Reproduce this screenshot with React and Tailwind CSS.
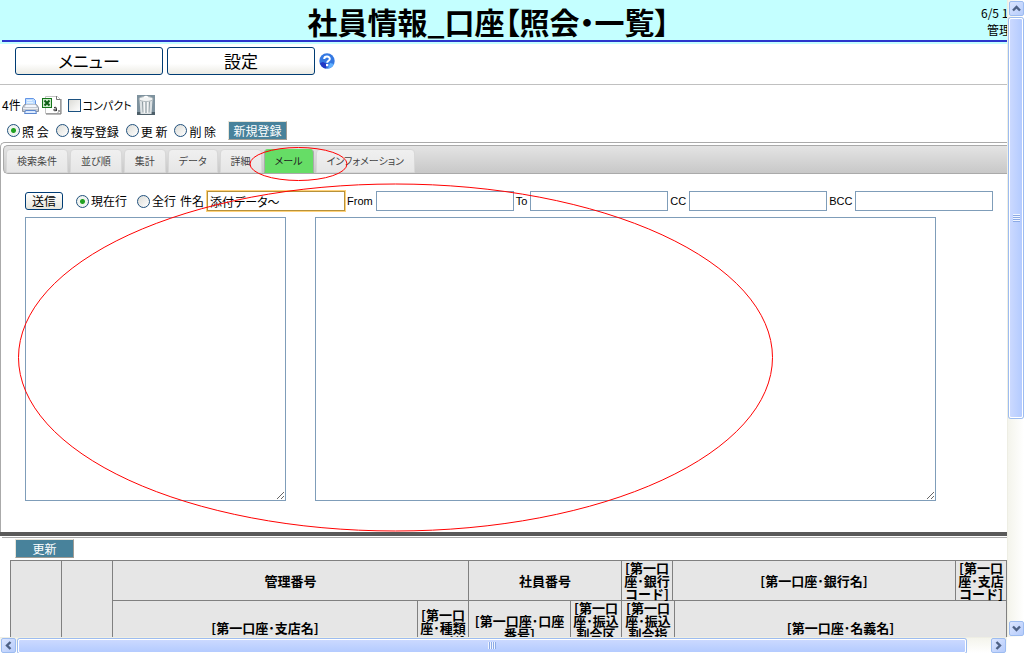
import React, { useState } from 'react';

const TABS = ['検索条件', '並び順', '集計', 'データ', '詳細', 'メール', 'インフォメーション'];
const MODES = ['照 会', '複写登録', '更 新', '削 除'];
const ADDRESS_FIELDS = ['From', 'To', 'CC', 'BCC'];

const radioClass =
    'appearance-none shrink-0 w-[13px] h-[13px] rounded-full border border-[#21517d] bg-linear-to-br from-[#dcdcd7] to-white checked:bg-[radial-gradient(circle,#21a121_0_2px,#f0f4f0_3px)]';
const thumbClass = 'rounded-[2px] border border-white shadow-[0_0_0_1px_#9dbcf0] flex items-center justify-center';
const arrowClass =
    'shrink-0 w-[15px] h-[15px] rounded-[2px] border border-[#9dbcf0] bg-linear-to-br from-[#dce6ff] to-[#b5cbfb] flex items-center justify-center';
const tealButtonClass =
    'w-[59px] h-[19px] border border-t-[#e8e4d8] border-l-[#e8e4d8] border-r-[#a09c94] border-b-[#a09c94] bg-[#48829b] text-white';

const Arrow = ({ d, label }) => (
    <button type="button" aria-label={label} className={arrowClass}>
        <svg width="9" height="9" viewBox="0 0 9 9" fill="none" stroke="#4d6185" strokeWidth="2.4">
            <path d={d} />
        </svg>
    </button>
);

const HelpIcon = () => (
    <svg width="16" height="16" viewBox="0 0 16 16">
        <circle cx="8" cy="8" r="7.7" fill="#3478e2" />
        <path d="M1 10a7.5 7.5 0 0 0 6 5.6L8 11 4 9z" fill="#2338c4" />
        <path d="M9 15.6A7.6 7.6 0 0 0 15 11l-4-1z" fill="#62b0ff" />
        <path d="M5.2 6C5.3 2.6 11 2.8 10.8 6c0 1.8-2.5 1.8-2.6 3.7" fill="none" stroke="#fff" strokeWidth="2" />
        <rect x="7" y="11" width="2.3" height="2.2" fill="#fff" />
    </svg>
);

const PrinterIcon = () => (
    <svg width="17" height="17" viewBox="0 0 17 17">
        <path d="M3.5 8V1.5h8l2 2V8z" fill="#bcdcff" stroke="#6495e6" />
        <path d="M5 3.5h5M5 5.5h6" stroke="#e4f1ff" />
        <path d="M2.5 7.5h12l2 3v4h-16v-4z" fill="#c3c9d2" stroke="#8b93a0" />
        <path d="M4 7.5h9.5l1 2.5H3z" fill="#f2f7ff" />
        <path d="M1 11.5h15" stroke="#edf0f4" />
        <path d="M3.5 13.5h10l1 3h-12z" fill="#dcebff" stroke="#5b87cf" />
    </svg>
);

const ExcelIcon = () => (
    <svg width="20" height="20" viewBox="0 0 20 20">
        <path d="M3.5 1.5h12l3 3v14h-15z" fill="#fff" stroke="#c4c4c4" />
        <path d="M14.5 1v3.5h4M19 4v15H4" fill="none" stroke="#777" />
        <rect x=".5" y="3.5" width="9" height="9" fill="#cdeccd" stroke="#15761a" />
        <path d="M2.5 5.5 7.5 10.5M7.5 5.5 2.5 10.5" stroke="#0d5e14" strokeWidth="2" />
        <path d="M12 12.5q2.5-1 2.5 1v2.5M14.5 14q-3-.2-3 1t3 .6M17 15v1.500l-1 1" fill="none" stroke="#333" />
    </svg>
);

const TrashIcon = () => (
    <svg width="18" height="20" viewBox="0 0 18 20">
        <rect width="18" height="20" fill="#7e929e" />
        <path d="M0 17h18v3H0z" fill="#4d5f69" />
        <path d="M2.5 5h13l-1 14h-11z" fill="#dde2e4" />
        <path d="M5.5 6.500l.6 11M9 7v11M12.500 6.500l-.6 11" stroke="#8b999f" />
        <path d="M7.2 7v11M10.8 7v11" stroke="#fff" />
        <ellipse cx="9" cy="4" rx="7" ry="2.5" fill="#f2f4f4" stroke="#b0b9bd" />
        <path d="M7 2.5q2-2 4 0" fill="none" stroke="#fff" strokeWidth="1.2" />
    </svg>
);

const Th = ({ children, ...props }) => (
    <th className="border border-[#808080] p-0 text-[13px] leading-[13px] font-bold break-all [font-feature-settings:normal]" {...props}>
        {children}
    </th>
);

const Header = () => (
    <header className="relative bg-[#c4ffff] h-11 pl-[2px]">
        <div className="h-[42px] border-b-2 border-[#2a35cc] flex justify-center items-center">
            <h1 className="text-[30px] leading-[36px] font-bold pt-[2px] pr-8">社員情報_口座【照会・一覧】</h1>
        </div>
        <div className="absolute left-full top-1 -ml-[26px] whitespace-nowrap leading-[17px]">
            <p>6/5 15:20</p>
            <p className="pl-[6px]">管理者</p>
        </div>
    </header>
);

const MailPanel = () => (
    <form className="pt-[17px] pl-6 pb-[31px]" onSubmit={(e) => e.preventDefault()}>
        <div className="flex items-center h-5 whitespace-nowrap">
            <button
                type="submit"
                className="w-[38px] h-[18px] mr-[13px] shrink-0 rounded-[3px] border border-[#003c74] bg-linear-to-b from-white to-[#e6e5dc] leading-4"
            >
                送信
            </button>
            <label className="flex items-center gap-[2px] mr-[10px]">
                <input type="radio" name="target" defaultChecked className={radioClass} />
                現在行
            </label>
            <label className="flex items-center gap-[2px] mr-1">
                <input type="radio" name="target" className={radioClass} />
                全行
            </label>
            <label htmlFor="subject">件名</label>
            <input
                id="subject"
                autoFocus
                defaultValue="添付データ～"
                className="w-[138px] h-5 ml-[3px] px-[2px] shrink-0 border border-[#b8923a] shadow-[0_0_0_1px_#ffd27a] outline-none"
            />
            {ADDRESS_FIELDS.map((name) => (
                <React.Fragment key={name}>
                    <label htmlFor={name} className="ml-[2px] text-[11px] font-['Liberation_Sans',sans-serif]">{name}</label>
                    <input id={name} className="w-[138px] h-5 ml-[3px] px-[2px] shrink-0 border border-[#7f9db9] outline-none" />
                </React.Fragment>
            ))}
        </div>
        <div className="flex mt-[6px] gap-[29px]">
            <textarea aria-label="項目" className="w-[261px] h-[284px] border border-[#7f9db9] outline-none" />
            <textarea aria-label="本文" className="w-[621px] h-[284px] border border-[#7f9db9] outline-none" />
        </div>
    </form>
);

const ColumnTable = () => (
    <table className="table-fixed border-collapse bg-[#e6e6e6] w-[calc(100%-10px)] ml-[10px] mt-[2px]">
        <colgroup>
            <col className="w-[51px]" />
            <col className="w-[51px]" />
            <col className="w-[305px]" />
            <col className="w-[51px]" />
            <col className="w-[102px]" />
            <col className="w-[51px]" />
            <col className="w-[51px]" />
            <col className="w-[2px]" />
            <col />
            <col className="w-[51px]" />
        </colgroup>
        <thead>
            <tr className="h-10">
                <Th rowSpan={2} />
                <Th rowSpan={2} />
                <Th colSpan={2}>管理番号</Th>
                <Th colSpan={2}>社員番号</Th>
                <Th>[第一口座･銀行コード]</Th>
                <Th colSpan={2}>[第一口座･銀行名]</Th>
                <Th>[第一口座･支店コード]</Th>
            </tr>
            <tr className="h-[50px]">
                <Th>[第一口座･支店名]</Th>
                <Th>[第一口座･種類コード]</Th>
                <Th>[第一口座･口座番号]</Th>
                <Th>[第一口座･振込割合区分]</Th>
                <Th colSpan={2}>[第一口座･振込割合指定]</Th>
                <Th colSpan={2}>[第一口座･名義名]</Th>
            </tr>
        </thead>
    </table>
);

export default function App() {
    const [tab, setTab] = useState('メール');

    return (
        <div className="relative h-screen overflow-hidden flex flex-col bg-white text-black text-[12px] leading-[14px] font-['Noto_Sans_CJK_JP',sans-serif] [font-feature-settings:'palt']">
            <div className="flex flex-1 min-h-0">
                <main className="flex-1 min-w-0 overflow-hidden">
                    <Header />

                    <nav className="flex items-center gap-1 pl-[15px] pt-[3px] pb-[9px] border-b border-[#c0c0c0]">
                        {['メニュー', '設定'].map((name) => (
                            <button
                                key={name}
                                type="button"
                                className="w-[148px] h-7 rounded-[3px] border border-[#003c74] bg-linear-to-b from-white from-60% to-[#ecebe4] text-[17px] leading-6"
                            >
                                {name}
                            </button>
                        ))}
                        <a href="#help" aria-label="ヘルプ"><HelpIcon /></a>
                    </nav>

                    {/* Toolbar */}
                    <div className="flex items-center h-5 mt-[10px] pl-[2px]">
                        <span>4件</span>
                        <button type="button" aria-label="印刷" className="ml-px"><PrinterIcon /></button>
                        <button type="button" aria-label="Excel" className="ml-[3px]"><ExcelIcon /></button>
                        <label className="flex items-center gap-[2px] ml-[6px] text-[11px]">
                            <input type="checkbox" className="appearance-none w-[13px] h-[13px] border border-[#1c5180] bg-linear-to-br from-[#dcdcd7] to-white" />
                            コンパクト
                        </label>
                        <button type="button" aria-label="ごみ箱" className="ml-[5px]"><TrashIcon /></button>
                    </div>

                    <div className="flex items-center h-[19px] mt-[6px] pl-[7px] gap-[7px]">
                        {MODES.map((mode, i) => (
                            <label key={mode} className="flex items-center gap-[2px] [font-feature-settings:normal]">
                                <input type="radio" name="mode" defaultChecked={i === 0} className={radioClass} />
                                <span className="pt-[3px]">{mode}</span>
                            </label>
                        ))}
                        <button type="button" className={`${tealButtonClass} ml-[5px] [font-feature-settings:normal]`}>
                            新規登録
                        </button>
                    </div>

                    {/* Tab panel */}
                    <section className="mt-[2px] border-t border-l border-[#aaa] rounded-tl-[5px]">
                        <div className="flex items-end gap-[2px] h-[29px] mt-[2px] ml-[2px] pl-[2px] border border-r-0 border-[#aaa] rounded-l-[5px] bg-linear-to-b from-[#e4e4e4] to-[#c8c8c8]">
                            {TABS.map((name) => (
                                <button
                                    key={name}
                                    type="button"
                                    onClick={() => setTab(name)}
                                    className={`h-6 px-[10px] border rounded-t-[4px] text-[10px] whitespace-nowrap ${
                                        name === tab ? 'bg-[#66dd66] border-[#aaa] border-y-[#66dd66] text-[#222]' : 'bg-linear-to-b from-[#f0f0f0] to-[#e6e6e6] border-[#d8d8d8] text-[#444]'
                                    }`}
                                >
                                    {name}
                                </button>
                            ))}
                        </div>
                        <MailPanel />
                    </section>

                    <div className="h-1 bg-[#595959]" />
                    <div className="mt-px ml-[2px] border-t border-[#aaa]" />
                    <button type="button" className={`${tealButtonClass} block mt-px ml-[15px]`}>
                        更新
                    </button>
                    <ColumnTable />
                </main>

                {/* Vertical scrollbar */}
                <div className="w-[17px] shrink-0 flex flex-col items-center gap-[2px] py-px border-l border-[#eeeee4] bg-linear-to-r from-[#f4f4ec] to-white">
                    <Arrow label="上へ" d="M1 6.5 4.5 3 8 6.5" />
                    <div className={`${thumbClass} w-[14px] flex-2 bg-linear-to-r from-[#cbd9ff] to-[#b4cbff]`}>
                        <div className="w-[7px] h-2 bg-[repeating-linear-gradient(#f0f5ff_0_1px,#8caae6_1px_2px)]" />
                    </div>
                    <div className="flex-1" />
                    <Arrow label="下へ" d="M1 2.5 4.5 6 8 2.5" />
                </div>
            </div>

            {/* Horizontal scrollbar */}
            <div className="h-4 shrink-0 mr-[17px] flex items-center gap-[2px] px-px border-t border-[#eeeee4] bg-linear-to-b from-[#f4f4ec] to-white">
                <Arrow label="左へ" d="M6.5 1 3 4.5 6.5 8" />
                <div className={`${thumbClass} h-[14px] flex-45 bg-linear-to-b from-[#cbd9ff] to-[#b4cbff]`}>
                    <div className="w-2 h-[7px] bg-[repeating-linear-gradient(90deg,#f0f5ff_0_1px,#8caae6_1px_2px)]" />
                </div>
                <div className="flex-1" />
                <Arrow label="右へ" d="M2.5 1 6 4.5 2.5 8" />
            </div>

            {/* Red marker ellipses lie over the mail tab and its panel */}
            <svg className="absolute left-0 top-0 pointer-events-none" width="1007" height="637" fill="none" stroke="#f00">
                <ellipse cx="298.5" cy="164" rx="48.5" ry="16.5" />
                <ellipse cx="395.5" cy="357.5" rx="377" ry="173.5" />
            </svg>
        </div>
    );
}
